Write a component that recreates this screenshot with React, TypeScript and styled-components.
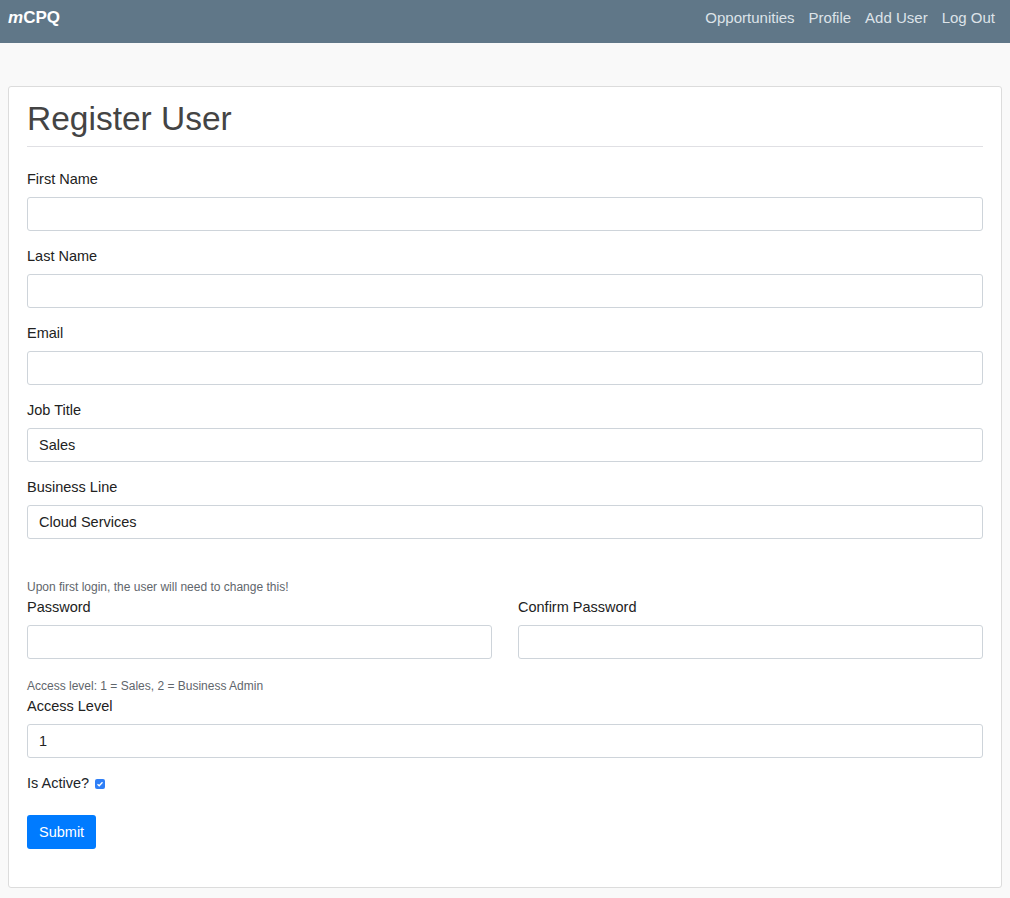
import React from "react";
import styled, { createGlobalStyle } from "styled-components";

const GlobalStyle = createGlobalStyle`
  body {
    margin: 0;
    background: #f9f9f9;
    font-family: "Liberation Sans", Arial, sans-serif;
    color: #212529;
  }
  * { box-sizing: border-box; }
`;

const NavBar = styled.nav`
  height: 43px;
  background: #607788;
  display: flex;
  align-items: center;
  justify-content: space-between;
  padding: 0 15px 0 8px;
  margin-bottom: 43px;
`;

const Brand = styled.div`
  color: #fff;
  font-weight: bold;
  font-size: 17px;
  margin-top: -8px;
  em { font-style: italic; }
`;

const NavLinks = styled.div`
  display: flex;
  gap: 14px;
  margin-top: -9px;
`;

const NavLink = styled.a`
  color: #dde3e8;
  font-size: 15px;
  text-decoration: none;
`;

const Card = styled.div`
  margin: 0 8px 10px 8px;
  background: #fff;
  border: 1px solid #dcdcdc;
  border-radius: 3px;
  padding: 12px 18px 38px 18px;
`;

const Title = styled.h1`
  margin: 0 0 21px 0;
  font-size: 33.5px;
  font-weight: 400;
  color: #444;
  padding-bottom: 7px;
  border-bottom: 1px solid #e0e0e4;
  line-height: 40px;
`;

const Group = styled.div<{ $mb?: number }>`
  margin-bottom: ${({ $mb }) => $mb ?? 14}px;
`;

const Label = styled.label`
  display: block;
  font-size: 14.5px;
  line-height: 22px;
  margin-bottom: 7px;
  color: #222;
`;

const Input = styled.input`
  display: block;
  width: 100%;
  height: 34px;
  border: 1px solid #ced4da;
  border-radius: 3px;
  padding: 0 11px;
  font-size: 14.5px;
  font-family: inherit;
  color: #222;
  outline: none;
`;

const Hint = styled.small`
  display: block;
  font-size: 12px;
  line-height: 17px;
  color: #5f666c;
`;

const Row = styled.div`
  display: grid;
  grid-template-columns: 1fr 1fr;
  gap: 26px;
`;

const CheckRow = styled.div`
  display: flex;
  align-items: center;
  gap: 6px;
  font-size: 14.5px;
  line-height: 22px;
  margin-bottom: 21px;
`;

const Check = styled.span`
  width: 10px;
  height: 10px;
  border-radius: 2px;
  background: #2f7ff7;
  display: inline-flex;
  align-items: center;
  justify-content: center;
  margin-top: 2px;
`;

const SubmitButton = styled.button`
  background: #007bff;
  color: #fff;
  border: none;
  border-radius: 3px;
  height: 34px;
  padding: 0 12px;
  font-size: 14.5px;
  font-family: inherit;
  font-weight: 500;
`;

const fields = [
  { label: "First Name", value: "" },
  { label: "Last Name", value: "" },
  { label: "Email", value: "" },
  { label: "Job Title", value: "Sales" },
  { label: "Business Line", value: "Cloud Services" },
];

export default function App() {
  return (
    <>
      <GlobalStyle />
      <NavBar>
        <Brand>
          <em>m</em>CPQ
        </Brand>
        <NavLinks>
          <NavLink>Opportunities</NavLink>
          <NavLink>Profile</NavLink>
          <NavLink>Add User</NavLink>
          <NavLink>Log Out</NavLink>
        </NavLinks>
      </NavBar>
      <Card>
        <Title>Register User</Title>
        {fields.map((f, i) => (
          <Group key={f.label} $mb={i === fields.length - 1 ? 40 : 14}>
            <Label>{f.label}</Label>
            <Input defaultValue={f.value} />
          </Group>
        ))}
        <Hint>Upon first login, the user will need to change this!</Hint>
        <Row>
          <Group $mb={19}>
            <Label>Password</Label>
            <Input type="password" />
          </Group>
          <Group $mb={19}>
            <Label>Confirm Password</Label>
            <Input type="password" />
          </Group>
        </Row>
        <Hint>Access level: 1 = Sales, 2 = Business Admin</Hint>
        <Group>
          <Label>Access Level</Label>
          <Input defaultValue="1" />
        </Group>
        <CheckRow>
          Is Active?
          <Check>
            <svg width="8" height="8" viewBox="0 0 8 8">
              <path d="M1.5 4.2 L3.2 5.8 L6.5 2.2" stroke="#fff" strokeWidth="1.3" fill="none" />
            </svg>
          </Check>
        </CheckRow>
        <SubmitButton>Submit</SubmitButton>
      </Card>
    </>
  );
}
